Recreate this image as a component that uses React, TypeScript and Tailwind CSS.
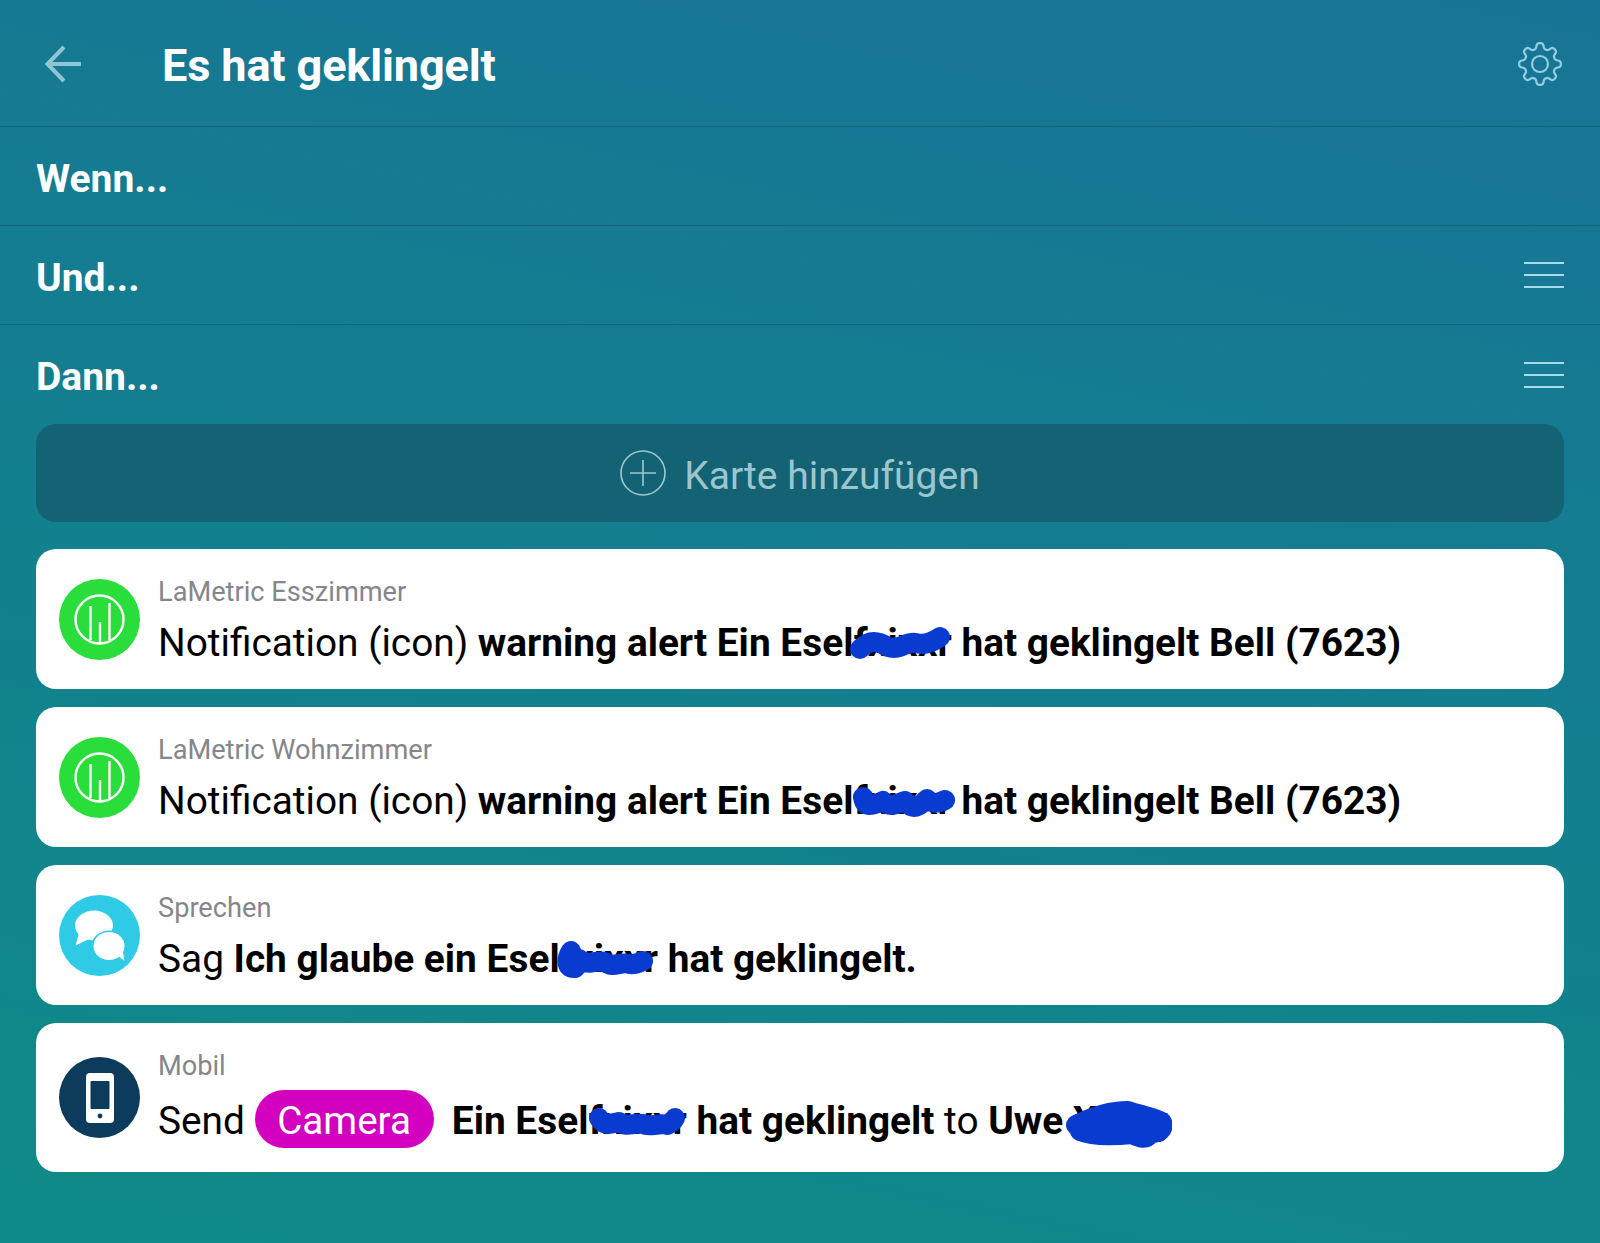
import type { ReactNode } from "react";

function gearPath() {
  const pts: string[] = [];
  const steps = 160;
  for (let i = 0; i < steps; i++) {
    const a = (i / steps) * Math.PI * 2 + Math.PI / 8;
    const wave = Math.cos(a * 8);
    const r = 18.2 + 2.8 * Math.tanh(wave * 1.8);
    pts.push(`${(24 + r * Math.cos(a)).toFixed(2)} ${(24 + r * Math.sin(a)).toFixed(2)}`);
  }
  return "M" + pts.join("L") + "Z";
}

function LaMetricIcon() {
  return (
    <div className="w-[81px] h-[81px] rounded-full bg-[#29dd3b] shrink-0">
      <svg width="81" height="81" viewBox="0 0 81 81" fill="none" stroke="#ffffff" strokeWidth="2.4">
        <circle cx="40.5" cy="40.5" r="24" />
        <path d="M31.5 27V61M41 43V64.5M50.5 24V61" />
      </svg>
    </div>
  );
}

function SpeakIcon() {
  return (
    <div className="w-[81px] h-[81px] rounded-full bg-[#2fcbe6] shrink-0">
      <svg width="81" height="81" viewBox="0 0 81 81" fill="#ffffff">
        <ellipse cx="35" cy="30.5" rx="19" ry="15" />
        <path d="M20 38L16.500 50.500L30 44Z" />
        <ellipse cx="50" cy="51" rx="17.500" ry="15.500" fill="#2fcbe6" />
        <ellipse cx="50" cy="51" rx="15.500" ry="14" />
        <path d="M58 60L65.500 66L63 52Z" />
      </svg>
    </div>
  );
}

function MobileIcon() {
  return (
    <div className="w-[81px] h-[81px] rounded-full bg-[#0c3b5b] shrink-0 flex items-center justify-center">
      <svg width="28" height="50" viewBox="0 0 28 50">
        <rect width="28" height="50" rx="4" fill="#ffffff" />
        <rect x="4.500" y="8" width="19" height="28" rx="1" fill="#0c3b5b" />
        <circle cx="14" cy="43" r="2.400" fill="#0c3b5b" />
      </svg>
    </div>
  );
}

function Scribble({ d, width, height = 48, className }: { d: string; width: number; height?: number; className: string }) {
  return (
    <svg
      className={`absolute ${className}`}
      width={width}
      height={height}
      viewBox={`0 0 ${width} ${height}`}
      fill="none"
      stroke="#0a3bd0"
      strokeWidth="20"
      strokeLinecap="round"
      strokeLinejoin="round"
    >
      <path d={d} />
    </svg>
  );
}

function MenuLines() {
  return (
    <div className="w-10 flex flex-col gap-[10px]">
      <div className="h-[2px] bg-[#a4dcec]" />
      <div className="h-[2px] bg-[#a4dcec]" />
      <div className="h-[2px] bg-[#a4dcec]" />
    </div>
  );
}

function SectionRow({ label, menu, border }: { label: string; menu?: boolean; border?: boolean }) {
  return (
    <div
      className={`h-[99px] pl-9 pr-9 flex items-center justify-between shrink-0 ${
        border ? "border-b border-[#12627c]" : ""
      }`}
    >
      <div className="text-[39px] font-bold text-white pt-[6px]">{label}</div>
      {menu && <MenuLines />}
    </div>
  );
}

function FlowCard({
  icon,
  title,
  tall,
  children,
}: {
  icon: ReactNode;
  title: string;
  tall?: boolean;
  children: ReactNode;
}) {
  return (
    <div
      className={`bg-white rounded-[20px] pl-[23px] flex items-center gap-[18px] shrink-0 ${
        tall ? "h-[149px]" : "h-[140px]"
      }`}
    >
      {icon}
      <div className={`flex flex-col ${tall ? "pt-[2px]" : "pt-[6px]"}`}>
        <div className="text-[27.200px] leading-[32px] text-[#85858c]">{title}</div>
        <div className={`text-[38.800px] leading-[50px] text-black whitespace-nowrap ${tall ? "mt-[8px]" : "mt-[10px]"}`}>
          <span className="whitespace-pre">{children}</span>
        </div>
      </div>
    </div>
  );
}

export default function App() {
  return (
    <div
      className="w-full h-[1243px] flex flex-col bg-[linear-gradient(192deg,#187496,#0e8b88)] overflow-hidden"
      style={{ fontFamily: "Roboto, sans-serif" }}
    >
      {/* Header */}
      <div className="h-[127px] pl-[44px] pr-9 flex items-center border-b border-[#12627c] shrink-0">
        <svg width="40" height="40" viewBox="0 0 40 40" fill="none" stroke="#8fc5d4" strokeWidth="4" className="mt-[1px]">
          <path d="M37 20H4M20 3L3.500 20L20 37" />
        </svg>
        <div className="ml-[78px] text-[45.100px] font-bold text-white tracking-[-0.15px] pt-[6px]">Es hat geklingelt</div>
        <svg width="48" height="48" viewBox="0 0 48 48" fill="none" stroke="#95cfdf" strokeWidth="2.200" className="ml-auto mt-[2px]">
          <path d={gearPath()} />
          <circle cx="24" cy="24" r="8" />
        </svg>
      </div>

      <SectionRow label="Wenn..." border />
      <SectionRow label="Und..." menu border />
      <SectionRow label="Dann..." menu />

      <div className="px-9 flex flex-col">
        <div className="h-[98px] rounded-[20px] bg-[#136374] flex items-center justify-center gap-[18px] shrink-0">
          <svg width="46" height="46" viewBox="0 0 46 46" fill="none" stroke="#9ec8d0" strokeWidth="1.600">
            <circle cx="23" cy="23" r="22" />
            <path d="M23 10V36M10 23H36" />
          </svg>
          <div className="text-[39px] text-[#9cc6ce] pt-[6px]">Karte hinzufügen</div>
        </div>

        <div className="mt-[27px] flex flex-col gap-[18px]">
          <FlowCard icon={<LaMetricIcon />} title="LaMetric Esszimmer">
            Notification (icon){" "}
            <b className="font-bold">
              warning alert Ein{" "}
              <span className="relative tracking-[0.1px]">
                Eselfxixxr
                <Scribble
                  width={100}
                  className="left-[70px] top-[-2px]"
                  d="M10 31C20 21 28 23 38 29C50 33 56 23 66 25C76 28 84 23 90 19"
                />
              </span>{" "}
              hat geklingelt Bell (7623)
            </b>
          </FlowCard>
          <FlowCard icon={<LaMetricIcon />} title="LaMetric Wohnzimmer">
            Notification (icon){" "}
            <b className="font-bold">
              warning alert Ein{" "}
              <span className="relative tracking-[0.1px]">
                Eselfxixxr
                <Scribble
                  width={102}
                  className="left-[73px] top-[-1px]"
                  d="M10 20C12 32 20 28 30 24C38 32 44 26 52 24C60 34 66 30 74 22C80 28 86 26 92 23"
                />
              </span>{" "}
              hat geklingelt Bell (7623)
            </b>
          </FlowCard>
          <FlowCard icon={<SpeakIcon />} title="Sprechen">
            Sag{" "}
            <b className="font-bold">
              Ich glaube ein{" "}
              <span className="relative tracking-[0.1px]">
                Eselfxixxr
                <Scribble
                  width={98}
                  className="left-[69px] top-[-1px]"
                  d="M16 16C10 26 12 34 20 33C26 28 18 22 24 24C34 32 42 24 50 27C58 34 66 26 74 29C80 30 84 28 88 26"
                />
              </span>{" "}
              hat geklingelt.
            </b>
          </FlowCard>
          <FlowCard icon={<MobileIcon />} title="Mobil" tall>
            Send{" "}
            <span className="inline-block h-[58px] leading-[62px] w-[179px] text-center rounded-full bg-[#d400c0] text-white text-[38.600px] -mr-[1px]">
              Camera
            </span>{" "}
            <b className="font-bold">
              {" "}Ein{" "}
              <span className="relative tracking-[0.1px]">
                Eselfxixxr
                <Scribble
                  width={96}
                  className="left-[74px] top-[-2px]"
                  d="M10 22C14 30 22 28 30 26C38 32 46 26 54 28C62 32 70 26 78 29C82 27 85 24 86 22"
                />
              </span>{" "}
              hat geklingelt
            </b>{" "}
            to{" "}
            <b className="font-bold">
              Uwe{" "}
              <span className="relative">
                Xxxig
                <Scribble
                  width={106}
                  height={58}
                  className="left-[-7px] top-0"
                  d="M10 27C24 20 44 13 62 13C78 18 90 20 96 24C98 32 94 34 84 36C80 42 74 40 66 36C46 38 26 38 14 33M30 25C50 22 70 26 88 29"
                />
              </span>
            </b>
          </FlowCard>
        </div>
      </div>
    </div>
  );
}
